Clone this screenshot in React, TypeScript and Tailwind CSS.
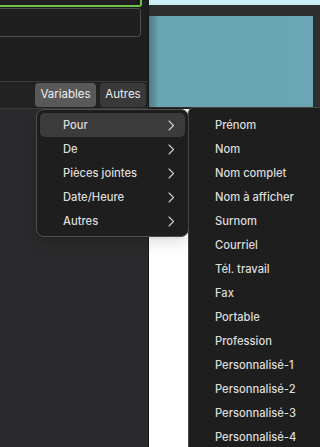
import React from 'react';

const sub = ['Pour', 'De', 'Pièces jointes', 'Date/Heure', 'Autres'];
const fields = [
  'Prénom',
  'Nom',
  'Nom complet',
  'Nom à afficher',
  'Surnom',
  'Courriel',
  'Tél. travail',
  'Fax',
  'Portable',
  'Profession',
  'Personnalisé-1',
  'Personnalisé-2',
  'Personnalisé-3',
  'Personnalisé-4',
];

const Chevron = () => (
  <svg width="7" height="11" viewBox="0 0 7 11" fill="none" stroke="#d0d0d0" strokeWidth="1.1" strokeLinecap="round" strokeLinejoin="round">
    <path d="M1 1l4.5 4.5L1 10" />
  </svg>
);

const App: React.FC = () => {
  return (
    <div className="relative h-[447px] w-[320px] overflow-hidden bg-white font-['Inter',sans-serif] text-[11.2px] font-medium text-[#dcdcdc]">
      <div className="flex h-full">
        {/* left editor column */}
        <div className="flex w-[149px] flex-col border-r border-[#161616] bg-[#1e1e1e]">
          <div className="-mt-1 h-[11px] w-[142px] rounded-br-[3px] border-b-2 border-r-2 border-[#6cc247]" />
          <div className="-ml-1 mt-[1px] h-[29px] w-[145px] rounded-r-[3px] border border-[#4d4d4d] bg-[#1f1f1f]" />
          <div className="flex-1" />
          <div className="flex h-[28px] items-center justify-end gap-[4px] border-y border-[#3a3a3a] bg-[#222] pr-[2px]">
            <button className="h-[24px] w-[61px] rounded-[4px] bg-[#595959] text-[11.5px] font-normal text-[#eee]">Variables</button>
            <button className="h-[24px] w-[46px] rounded-[4px] bg-[#393939] text-[11.5px] font-normal text-[#eee]">Autres</button>
          </div>
          <div className="h-[338px] bg-[#2a2a2c]" />
        </div>

        {/* right preview column */}
        <div className="flex flex-1 flex-col">
          <div className="h-[5px] bg-[#cdeff3]" />
          <div className="flex h-[103px] flex-col bg-[#2e2e2e] pt-[11px]">
            <div className="mr-[7px] h-[91px] bg-[linear-gradient(to_right,#4d7b88,#6aa5b3_10px,#6ba6b4)]" />
          </div>
          <div className="h-[1px] bg-[#1a1a1a]" />
          <div className="flex-1 bg-white" />
        </div>
      </div>

      {/* submenu */}
      <div className="absolute left-[36px] top-[109px] w-[153px] rounded-[8px] border border-[#4f4f4f] bg-[#1e1e1e] p-[3px] shadow-lg">
        {sub.map((s, i) => (
          <div
            key={s}
            className={
              'flex h-[24px] items-center justify-between rounded-[5px] pl-[23px] pr-[10px] ' +
              (i === 0 ? 'bg-[#3b3b3b]' : '')
            }
          >
            <span>{s}</span>
            <Chevron />
          </div>
        ))}
      </div>

      {/* field list */}
      <div className="absolute bottom-0 left-[188px] right-0 top-[107px] rounded-tl-[6px] border-l border-t border-[#454545] bg-[#1e1e1e] pt-[5px]">
        {fields.map((f) => (
          <div key={f} className="flex h-[24px] items-center pl-[26px]">
            {f}
          </div>
        ))}
      </div>
    </div>
  );
};

export default App;
